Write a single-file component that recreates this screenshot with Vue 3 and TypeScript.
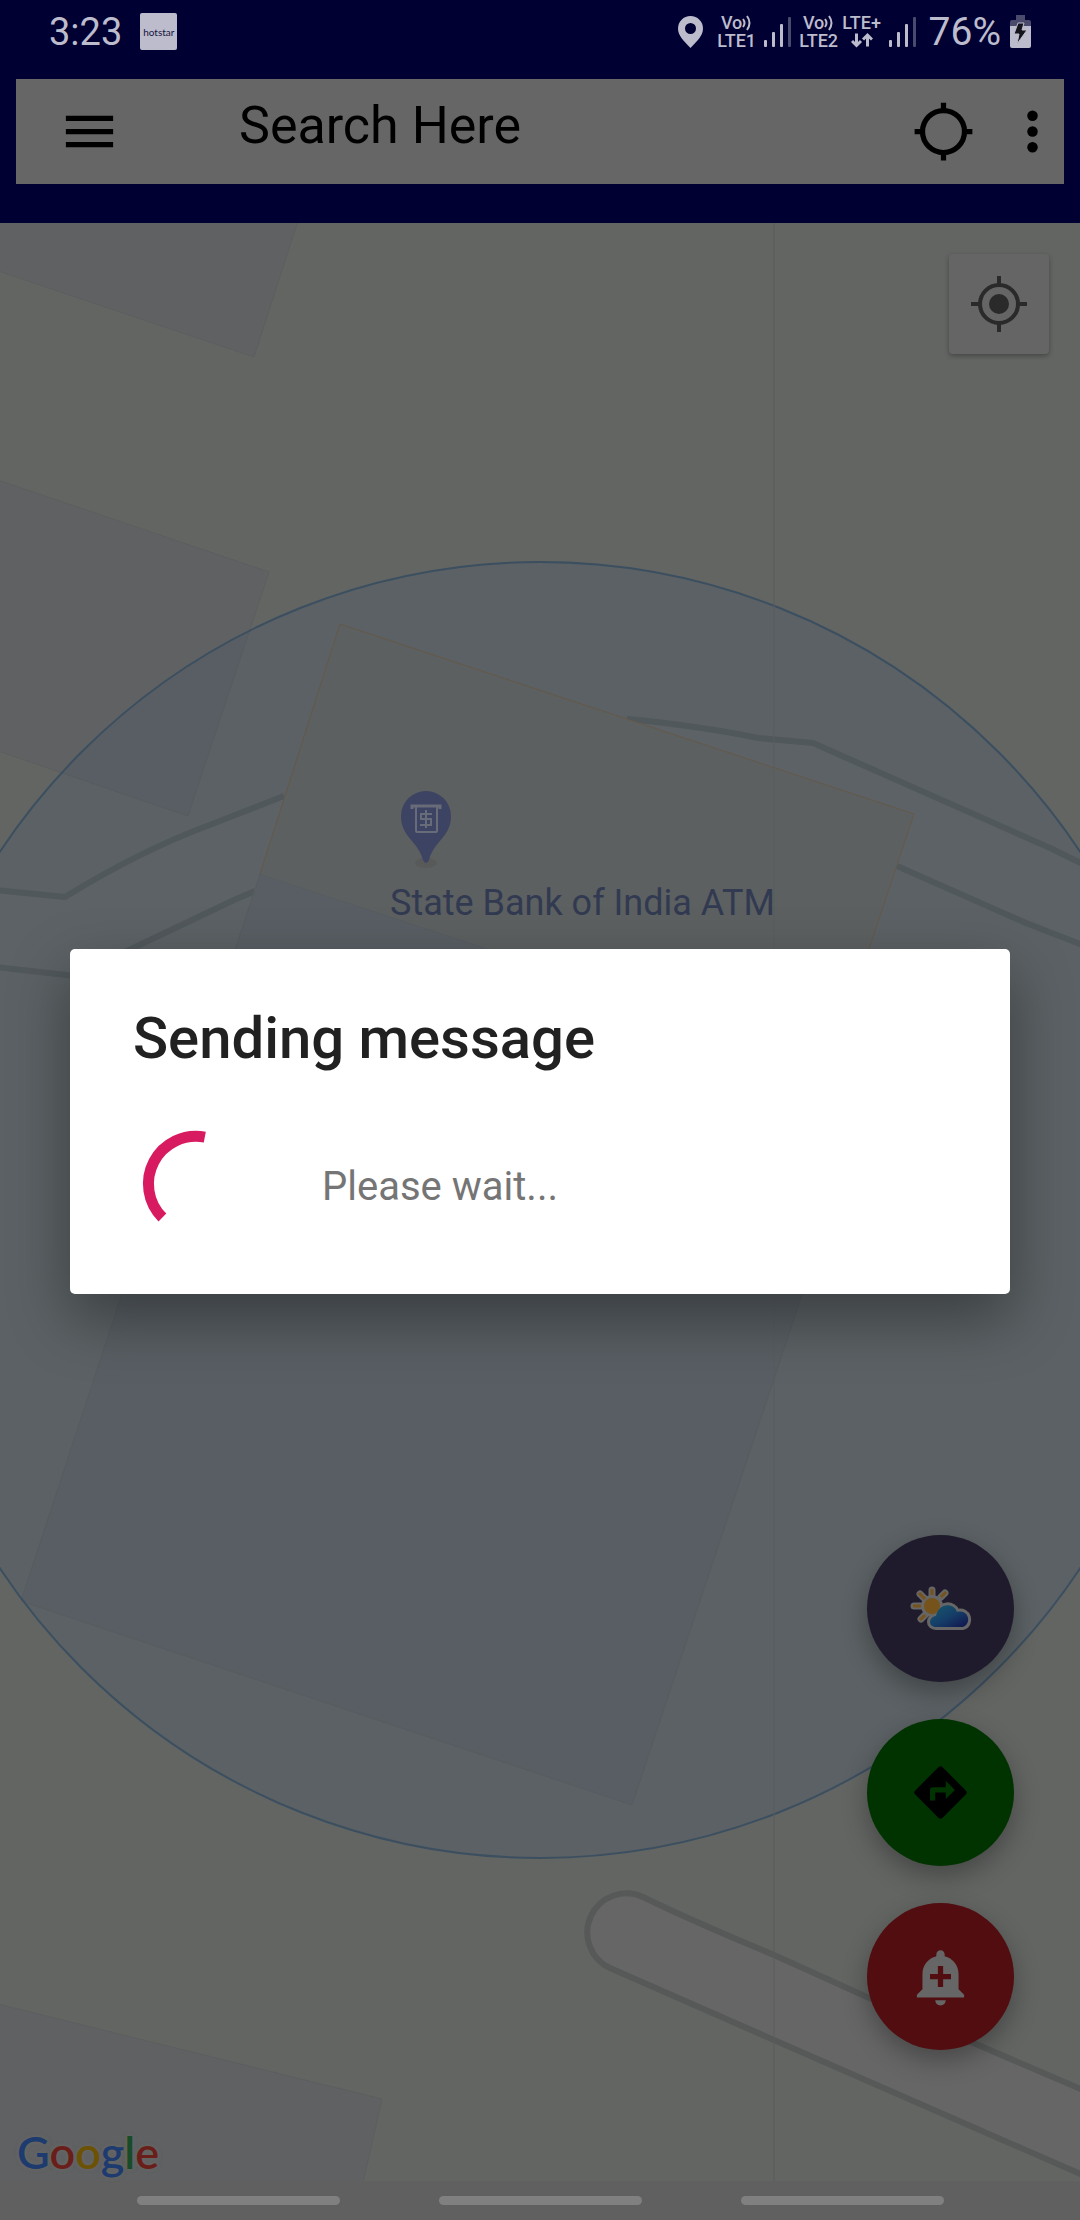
<script setup lang="ts">
import { ref } from 'vue'

const query = ref('')
const navKeys = ['Recent apps', 'Home', 'Back']
const logo = [
  { ch: 'G', color: '#1d3b6e' },
  { ch: 'o', color: '#6a1e19' },
  { ch: 'o', color: '#6b5205' },
  { ch: 'g', color: '#1d3b6e' },
  { ch: 'l', color: '#184c27' },
  { ch: 'e', color: '#6a1e19' },
]
</script>

<template>
  <div class="screen">
    <header class="top">
      <div class="status">
        <span class="clock">3:23</span>
        <span class="hotstar">hotstar</span>
        <div class="status-right">
          <svg class="pin" viewBox="0 0 25 32" width="25" height="32">
            <path fill="#bcbccc" fill-rule="evenodd" d="M12.500 0C5.500 0 0 5.500 0 12.500C0 20 6 25 12.500 32C19 25 25 20 25 12.500C25 5.500 19.500 0 12.500 0ZM12.500 7A5.500 5.500 0 1 1 12.500 18A5.500 5.500 0 1 1 12.500 7Z" />
          </svg>
          <div class="lte">
            <span>Vo<svg viewBox="0 0 10 16" width="10" height="16"><path d="M1 4Q4 8 1 12M5 1Q10 8 5 15" fill="none" stroke="#bcbccc" stroke-width="2" /></svg></span>
            <span>LTE1</span>
          </div>
          <svg class="bars" viewBox="0 0 27 32" width="27" height="32">
            <g fill="#bcbccc"><rect y="24" width="3" height="7" rx="1" /><rect x="8" y="16" width="3" height="15" rx="1" /><rect x="16" y="8" width="3" height="23" rx="1" /></g>
            <rect x="24" y="1" width="3" height="30" rx="1" fill="#4a4a6c" />
          </svg>
          <div class="lte">
            <span>Vo<svg viewBox="0 0 10 16" width="10" height="16"><path d="M1 4Q4 8 1 12M5 1Q10 8 5 15" fill="none" stroke="#bcbccc" stroke-width="2" /></svg></span>
            <span>LTE2</span>
          </div>
          <div class="lte plus">
            <span>LTE+</span>
            <svg viewBox="0 0 22 14" width="22" height="17"><path d="M5.500 0V12M1 7.500L5.500 12L10 7.500M16.500 13V1.500M12 6L16.500 1.500L21 6" fill="none" stroke="#bcbccc" stroke-width="3" /></svg>
          </div>
          <svg class="bars" viewBox="0 0 27 32" width="27" height="32">
            <g fill="#bcbccc"><rect y="24" width="3" height="7" rx="1" /><rect x="8" y="16" width="3" height="15" rx="1" /><rect x="16" y="8" width="3" height="23" rx="1" /></g>
            <rect x="24" y="1" width="3" height="30" rx="1" fill="#4a4a6c" />
          </svg>
          <span class="percent">76%</span>
          <svg viewBox="0 0 21 33" width="21" height="33">
            <path fill="#4a4a6c" d="M6 0H15V5H19Q21 5 21 7V12H0V7Q0 5 2 5H6Z" />
            <path fill="#bcbccc" d="M0 11H21V31Q21 33 19 33H2Q0 33 0 31Z" />
            <path fill="#14141c" stroke="#bcbccc" d="M8 8H14L12 15H17L7 29L9 19H4Z" />
          </svg>
        </div>
      </div>
      <div class="search">
        <button class="icon-btn menu" aria-label="Open menu">
          <svg viewBox="0 0 24 24"><path d="M3 18h18v-2H3v2zm0-5h18v-2H3v2zm0-7v2h18V6H3z" /></svg>
        </button>
        <input v-model="query" class="query" type="text" placeholder="Search Here" aria-label="Search Here" />
        <button class="icon-btn" aria-label="Locate place">
          <svg viewBox="0 0 24 24"><circle cx="12" cy="12" r="8" fill="none" stroke="#000" stroke-width="2" /><path d="M11 1h2v3h-2zM11 20h2v3h-2zM1 11h3v2H1zM20 11h3v2h-3z" /></svg>
        </button>
        <button class="icon-btn more" aria-label="More options">
          <svg viewBox="0 0 24 24"><circle cx="12" cy="6" r="2" /><circle cx="12" cy="12" r="2" /><circle cx="12" cy="18" r="2" /></svg>
        </button>
      </div>
    </header>

    <main class="map">
      <svg class="tiles" viewBox="0 223 1080 1958" preserveAspectRatio="xMidYMid slice">
        <rect y="223" width="1080" height="1958" fill="#636563" />
        <g fill="#606162" stroke="#5d5e5f">
          <path d="M-2 221H298L254 357L-2 271Z" />
          <path d="M-2 480L269 572L188 816L-2 751Z" />
          <path d="M-2 2004L382 2099L363 2183H-2Z" />
        </g>
        <path d="M-5 890L65 897Q140 851 207 826L284 796L627 719L758 738L813 743L1050 848L1085 865V946L1026 923L898 866L251 892L234 900L131 949L75 976L-5 967Z" fill="#656666" />
        <g fill="none" stroke="#575959" stroke-width="6" stroke-linejoin="round">
          <path d="M-5 890L65 897Q140 851 207 826L284 796" />
          <path d="M627 719Q700 726 758 738L813 743L1050 848L1085 865" />
          <path d="M-5 967L75 976L131 949L234 900L255 891" />
          <path d="M897 866L1026 923L1085 946" />
          <path fill="#666" d="M1085 2091L867 1997L774 1955Q690 1920 643 1897A39 39 0 1 0 610 1968L774 2040L1085 2176" />
        </g>
        <path d="M260 874L875 1076L632 1805L21 1601Z" fill="#606162" stroke="#5d5e5f" />
        <path d="M340 624L914 814L869 949L830 1061L260 874Z" fill="#65635e" />
        <circle cx="540" cy="1210" r="648" fill="#355168" fill-opacity="0.180" stroke="#3b4f60" stroke-width="2" />
        <path d="M260 874L340 624L914 814L869 949" fill="none" stroke="#64594a" />
        <path d="M774 223V2181" stroke="#5b5d5c" stroke-width="1" />
        <ellipse cx="426" cy="863" rx="11" ry="5" fill="#575a59" />
        <path d="M426 791A25 25 0 0 0 401 816C401 837 418 841 423 860Q426 866 429 860C434 841 451 837 451 816A25 25 0 0 0 426 791Z" fill="#3d4362" />
        <g fill="none" stroke="#686c78">
          <path d="M412 809V806H440V809" stroke-width="3" />
          <path d="M416 807V831Q416 832 417 832H435Q437 832 437 831V807" stroke-width="2" />
          <path d="M432 814H421V819H431V825H420M426 810V828" stroke-width="2" />
        </g>
        <text x="390" y="915" class="place">State Bank of India ATM</text>
      </svg>

      <button class="locate" aria-label="My location">
        <svg viewBox="0 0 56 56" width="56" height="56">
          <circle cx="28" cy="28" r="19" fill="none" stroke="#2a2a2a" stroke-width="4" />
          <circle cx="28" cy="28" r="10" fill="#2a2a2a" />
          <path fill="#2a2a2a" d="M26 0h4v8h-4zM26 48h4v8h-4zM0 26h8v4H0zM48 26h8v4h-8z" />
        </svg>
      </button>

      <div class="fabs">
        <button class="fab weather" aria-label="Weather">
          <svg viewBox="0 0 64 46" width="64" height="46">
            <defs>
              <linearGradient id="cloud" x1="0" y1="0" x2="1" y2="1">
                <stop offset="0" stop-color="#17586b" /><stop offset="0.500" stop-color="#153f68" /><stop offset="1" stop-color="#11134d" />
              </linearGradient>
            </defs>
            <path d="M23 4V9M36 7L32 11M11 8L16 13M5 20H12M12 33L16 29" stroke="#666" stroke-width="7" stroke-linecap="round" />
            <circle cx="23" cy="20" r="11" fill="#666" />
            <path d="M27 41C19 41 19 31 27 30C30 16 45 17 48 26C60 23 63 38 54 41Z" fill="#666" stroke="#666" stroke-width="6" stroke-linejoin="round" />
            <g stroke="#76531b" stroke-width="3">
              <path d="M23 3V9M37 6L32 11M10 7L16 13M4 20H12M11 34L16 29" />
            </g>
            <circle cx="23" cy="20" r="8" fill="#76531b" />
            <path d="M27 41C19 41 19 31 27 30C30 16 45 17 48 26C60 23 63 38 54 41Z" fill="url(#cloud)" />
          </svg>
        </button>
        <button class="fab route" aria-label="Directions">
          <svg viewBox="0 0 24 24" width="63" height="63"><path d="M21.710 11.290l-9-9c-.39-.39-1.020-.39-1.410 0l-9 9c-.39.39-.39 1.020 0 1.410l9 9c.39.39 1.020.39 1.410 0l9-9c.39-.38.39-1.010 0-1.410zM14 14.500V12h-4v3H8v-4c0-.55.450-1 1-1h5V7.500l3.500 3.500-3.500 3.500z" /></svg>
        </button>
        <button class="fab alert" aria-label="Add alert">
          <svg viewBox="0 0 24 24" width="63" height="63"><path fill="#666" d="M10.010 21.010c0 1.100.89 1.990 1.990 1.990s1.990-.89 1.990-1.990h-3.980zm8.870-4.190V11c0-3.250-2.250-5.970-5.290-6.690v-.72C13.590 2.710 12.880 2 12 2s-1.590.71-1.590 1.590v.72C7.370 5.030 5.120 7.750 5.120 11v5.820L3 18.940V20h18v-1.060l-2.120-2.120zM16 13.010h-3v3h-2v-3H8V11h3V8h2v3h3v2.010z" /></svg>
        </button>
      </div>

      <div class="logo"><span v-for="(l, i) in logo" :key="i" :style="{ color: l.color }">{{ l.ch }}</span></div>
    </main>

    <nav class="nav">
      <button v-for="k in navKeys" :key="k" class="key" :aria-label="k"></button>
    </nav>

    <div class="overlay">
      <section class="dialog" role="dialog" aria-labelledby="dialog-title">
        <h1 id="dialog-title" class="title">Sending message</h1>
        <div class="progress">
          <svg class="spinner" viewBox="0 0 126 126" width="126" height="126">
            <path d="M71.800 16.200A47.500 47.500 0 0 0 29.400 96.500" fill="none" stroke="#d81b60" stroke-width="11" />
          </svg>
          <p class="wait">Please wait...</p>
        </div>
      </section>
    </div>
  </div>
</template>

<style>
body {
  margin: 0;
}
</style>

<style scoped>
.screen {
  position: relative;
  display: flex;
  flex-direction: column;
  min-height: 100vh;
  font-family: Roboto, 'Liberation Sans', sans-serif;
}
button {
  padding: 0;
  border: 0;
  background: none;
}
svg {
  display: block;
}
.top {
  background: #000033;
  padding: 0 16px 39px;
}
.status {
  display: flex;
  align-items: center;
  height: 63px;
  margin-bottom: 16px;
  padding: 0 33px;
  color: #bcbccc;
}
.clock {
  font-size: 38px;
}
.hotstar {
  display: flex;
  align-items: center;
  justify-content: center;
  width: 37px;
  height: 37px;
  margin-left: 18px;
  border-radius: 2px;
  background: #bcbccc;
  color: #151541;
  font-family: Lato, sans-serif;
  font-size: 10px;
}
.status-right {
  display: flex;
  align-items: center;
  margin-left: auto;
}
.lte {
  display: flex;
  flex-direction: column;
  align-items: center;
  width: 40px;
  margin-left: 14px;
  font-size: 18px;
  font-weight: 500;
  line-height: 18px;
}
.lte span {
  display: flex;
  align-items: center;
}
.lte.plus {
  margin-left: 3px;
}
.bars {
  margin-left: 7px;
}
.bars + .lte {
  margin-left: 8px;
}
.percent {
  margin: 0 9px 0 13px;
  font-size: 39px;
}
.search {
  display: flex;
  align-items: center;
  height: 105px;
  padding-left: 42px;
  background: #666;
}
.icon-btn {
  width: 63px;
  height: 63px;
}
.icon-btn.more {
  margin-left: 26px;
}
.menu {
  margin-right: 118px;
}
.query {
  flex: 1;
  min-width: 0;
  padding: 0 0 13px;
  border: 0;
  background: none;
  font-family: inherit;
  font-size: 52px;
}
.query::placeholder {
  color: #000;
  opacity: 1;
}
.map {
  position: relative;
  display: flex;
  flex: 1;
  flex-direction: column;
  align-items: flex-end;
  min-height: 900px;
  background: #636563;
}
.tiles {
  position: absolute;
  inset: 0;
  width: 100%;
  height: 100%;
}
.place {
  fill: #323a52;
  font-size: 36px;
}
.locate {
  position: relative;
  display: grid;
  place-items: center;
  width: 100px;
  height: 100px;
  margin: 31px 31px 0 0;
  border-radius: 4px;
  background: #656565;
  box-shadow: 0 2px 5px rgba(0, 0, 0, 0.3);
}
.fabs {
  position: relative;
  display: flex;
  flex-direction: column;
  gap: 37px;
  margin: auto 66px 131px 0;
}
.fab {
  display: grid;
  place-items: center;
  width: 147px;
  height: 147px;
  border-radius: 50%;
  box-shadow: 0 10px 26px rgba(0, 0, 0, 0.3);
}
.weather {
  background: #1f1b2c;
}
.route {
  background: #003300;
}
.alert {
  background: #510d10;
}
.logo {
  position: absolute;
  left: 17px;
  bottom: 5px;
  font-family: Lato, sans-serif;
  font-size: 45px;
  font-weight: 600;
  line-height: 48px;
  text-shadow: 0 0 4px #666, 0 0 4px #666;
}
.nav {
  display: flex;
  align-items: center;
  justify-content: center;
  gap: 99px;
  height: 39px;
  background: #606060;
}
.key {
  width: 203px;
  height: 9px;
  border-radius: 5px;
  background: #808080;
}
.overlay {
  position: absolute;
  inset: 0;
  display: flex;
  align-items: center;
  padding: 63px 70px 40px;
}
.dialog {
  flex: 1;
  box-sizing: border-box;
  padding: 51px 63px 43px;
  border-radius: 5px;
  background: #fff;
  box-shadow: 0 24px 60px rgba(0, 0, 0, 0.36);
}
.title {
  margin: 0 0 41px;
  color: #212121;
  font-size: 58px;
  font-weight: 500;
  line-height: 76px;
}
.progress {
  display: flex;
  align-items: center;
  height: 134px;
}
.wait {
  margin: 0 0 0 63px;
  padding-top: 4px;
  color: #757575;
  font-size: 40px;
}
</style>
